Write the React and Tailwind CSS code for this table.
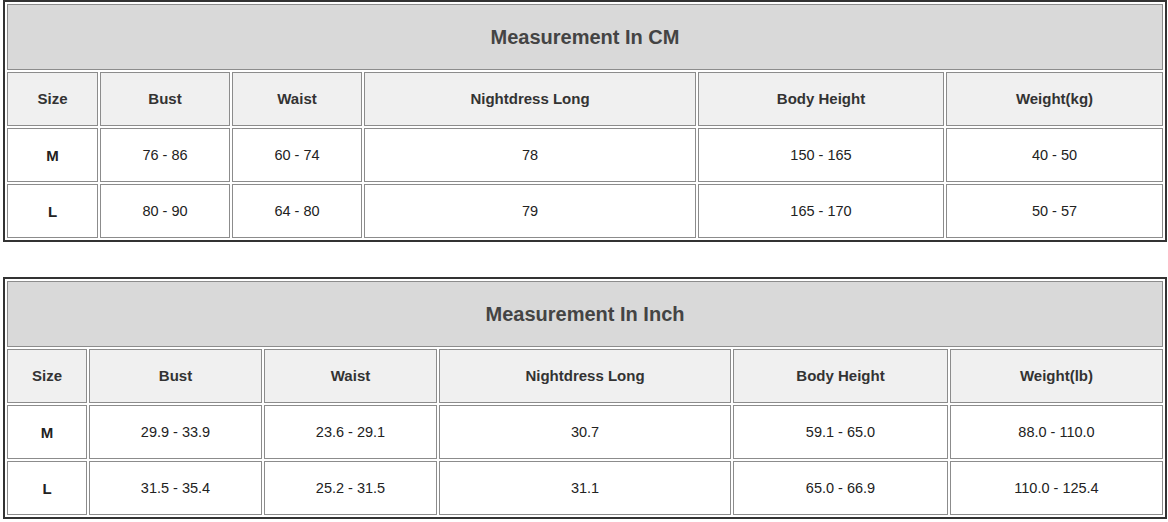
import React from "react";

const cm = {
  title: "Measurement In CM",
  cols: "grid-cols-[91px_130px_130px_332px_246px_1fr]",
  head: ["Size", "Bust", "Waist", "Nightdress Long", "Body Height", "Weight(kg)"],
  rows: [
    ["M", "76 - 86", "60 - 74", "78", "150 - 165", "40 - 50"],
    ["L", "80 - 90", "64 - 80", "79", "165 - 170", "50 - 57"],
  ],
};

const inch = {
  title: "Measurement In Inch",
  cols: "grid-cols-[80px_173px_173px_292px_215px_1fr]",
  head: ["Size", "Bust", "Waist", "Nightdress Long", "Body Height", "Weight(lb)"],
  rows: [
    ["M", "29.9 - 33.9", "23.6 - 29.1", "30.7", "59.1 - 65.0", "88.0 - 110.0"],
    ["L", "31.5 - 35.4", "25.2 - 31.5", "31.1", "65.0 - 66.9", "110.0 - 125.4"],
  ],
};

function Table({ data, className }) {
  return (
    <div className={"ml-[3px] w-[1164px] border-2 border-[#333333] p-[2px] " + className}>
      <div className={"grid gap-[2px] " + data.cols}>
        <div className="col-span-6 h-[66px] flex items-center justify-center border border-[#8c8c8c] bg-[#d9d9d9] text-[20px] font-bold text-[#444444]">
          {data.title}
        </div>
        {data.head.map((h, i) => (
          <div
            key={"h" + i}
            className="h-[54px] flex items-center justify-center border border-[#8c8c8c] bg-[#f0f0f0] text-[15px] font-bold text-[#333333]"
          >
            {h}
          </div>
        ))}
        {data.rows.map((r, ri) =>
          r.map((c, ci) => (
            <div
              key={ri + "-" + ci}
              className={
                "h-[54px] pt-[2px] flex items-center justify-center border border-[#8c8c8c] bg-white text-[#222222] " +
                (ci === 0 ? "font-bold text-[15px]" : "text-[14.5px]")
              }
            >
              {c}
            </div>
          ))
        )}
      </div>
    </div>
  );
}

export default function App() {
  return (
    <div className="w-[1168px] h-[522px] bg-white overflow-hidden font-['Liberation_Sans',Arial,sans-serif]">
      <Table data={cm} className="" />
      <Table data={inch} className="mt-[35px]" />
    </div>
  );
}
